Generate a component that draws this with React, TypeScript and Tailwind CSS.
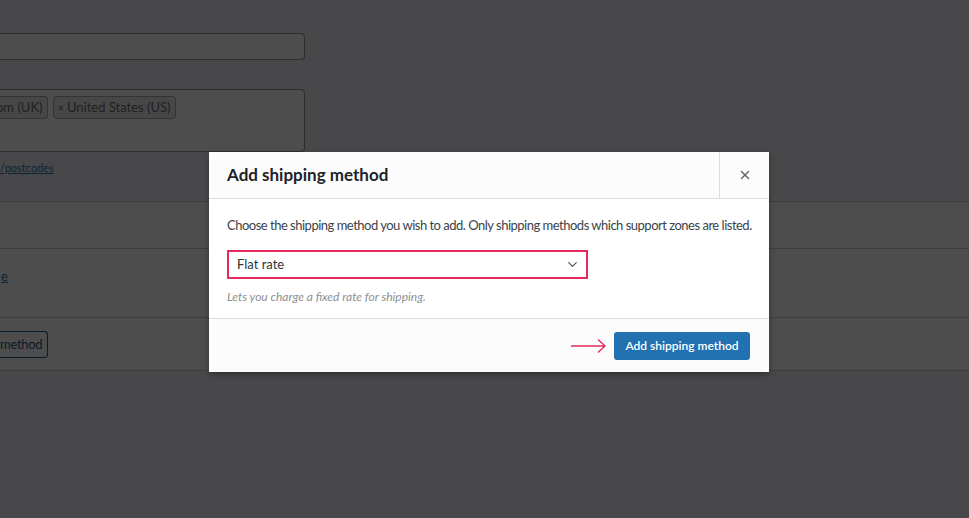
import { X, ChevronDown } from 'lucide-react';

const font = { fontFamily: 'Lato, "Open Sans", sans-serif' };

const Backdrop = () => {
    return (
        <div className="flex flex-col">
            <div className="h-[33px]" />
            <div className="w-[305px] h-[27px] border border-l-0 border-[#2e2e2e] rounded-r bg-[#4d4d4d]" />
            <div className="h-[29px]" />
            <div className="w-[305px] h-[63px] border border-l-0 border-[#2e2e2e] rounded-r bg-[#4d4d4d] flex items-start gap-[5px] pt-[6px]">
                <span className="h-[23px] border border-l-0 border-[#333] rounded-r-sm bg-[#474747] text-[13px] leading-[21px] text-[#1f1f1f] pr-[4px] -ml-[4px]">
                    om (UK)
                </span>
                <span className="h-[23px] border border-[#333] rounded-sm bg-[#474747] text-[13px] leading-[21px] text-[#1f1f1f] px-[4px]">
                    <span className="text-[11px] mr-[3px]">×</span>United States (US)
                </span>
            </div>
            <div className="h-[9px]" />
            <a className="text-[11px] leading-[14px] text-[#0c2235] underline w-fit">/postcodes</a>
            <div className="h-[26px]" />
            <div className="w-full bg-[#4d4d4d] border-t border-b border-[#3d3d3d] flex flex-col">
                <div className="h-[47px] border-b border-[#3d3d3d]" />
                <div className="h-[69px] border-b border-[#3d3d3d] pt-[14px]">
                    <a className="text-[13px] leading-[16px] text-[#0c2235] underline pl-[1px]">e</a>
                </div>
                <div className="h-[52px] flex items-center">
                    <div className="h-[27px] border border-l-0 border-[#0b1a28] rounded-r-sm pr-[5px] text-[13px] leading-[25px] text-[#0b1a28] tracking-[-0.3px]">
                        method
                    </div>
                </div>
            </div>
        </div>
    );
};

const ShippingModal = () => {
    return (
        <div className="absolute left-[209px] top-[152px] w-[560px] bg-white shadow-[0_3px_6px_rgba(0,0,0,0.3)] flex flex-col">
            <div className="h-[47px] bg-[#fcfcfc] border-b border-[#dddddd] flex items-stretch">
                <h1 className="flex-1 pl-[18px] text-[17px] font-bold text-[#1d2327] flex items-center">
                    Add shipping method
                </h1>
                <button className="w-[50px] border-l border-[#dddddd] flex items-center justify-center text-[#646970]">
                    <X size={14} strokeWidth={2.5} />
                </button>
            </div>
            <div className="h-[119px] px-[18px] pt-[18px] flex flex-col">
                <p className="text-[13px] leading-[17px] text-[#3c434a] whitespace-nowrap tracking-[-0.5px]">
                    Choose the shipping method you wish to add. Only shipping methods which support zones are listed.
                </p>
                <div className="mt-[16px] w-[361px] h-[29px] border-2 border-[#e8295c] flex items-center justify-between pl-[8px] pr-[6px] text-[13px] text-[#2c3338]">
                    <span>Flat rate</span>
                    <ChevronDown size={15} strokeWidth={2} className="text-[#50575e]" />
                </div>
                <p className="mt-[9px] text-[12px] italic text-[#8c8f94]">
                    Lets you charge a fixed rate for shipping.
                </p>
            </div>
            <div className="h-[54px] bg-[#fcfcfc] border-t border-[#dddddd] flex items-center justify-end pr-[19px] gap-[7px]">
                <svg width="36" height="14" viewBox="0 0 36 14" className="text-[#e8295c]">
                    <path d="M0 7 H34 M27 0.5 L34 7 L27 13.5" fill="none" stroke="currentColor" strokeWidth="1.4" />
                </svg>
                <button className="h-[28px] w-[136px] rounded-[3px] bg-[#2271b1] text-white text-[12px] font-semibold">
                    Add shipping method
                </button>
            </div>
        </div>
    );
};

export default function App() {
    return (
        <div className="relative w-[969px] h-[518px] overflow-hidden bg-[#48484a]" style={font}>
            <Backdrop />
            <ShippingModal />
        </div>
    );
}
